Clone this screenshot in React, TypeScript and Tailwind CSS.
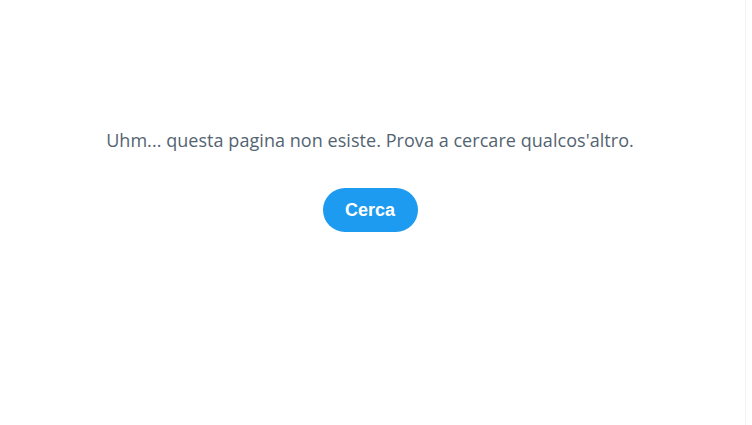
export default function App() {
  return (
    <div className="h-[425px] w-[752px] bg-white flex">
      <div className="w-[746px] h-full border-r border-[#eff3f4] pr-[5px]">
        <div className="flex flex-col items-center pt-[130px]">
          <div
            className="text-[18px] leading-[20px] text-[#536471] tracking-[0.05px]"
            style={{ fontFamily: "'Open Sans', 'Liberation Sans', sans-serif" }}
          >
            Uhm... questa pagina non esiste. Prova a cercare qualcos'altro.
          </div>
          <button
            className="mt-[38px] h-[44px] w-[95px] rounded-full bg-[#1d9bf0] text-white text-[18px] font-bold"
            style={{ fontFamily: "'Liberation Sans', Arial, sans-serif" }}
          >
            Cerca
          </button>
        </div>
      </div>
    </div>
  );
}
